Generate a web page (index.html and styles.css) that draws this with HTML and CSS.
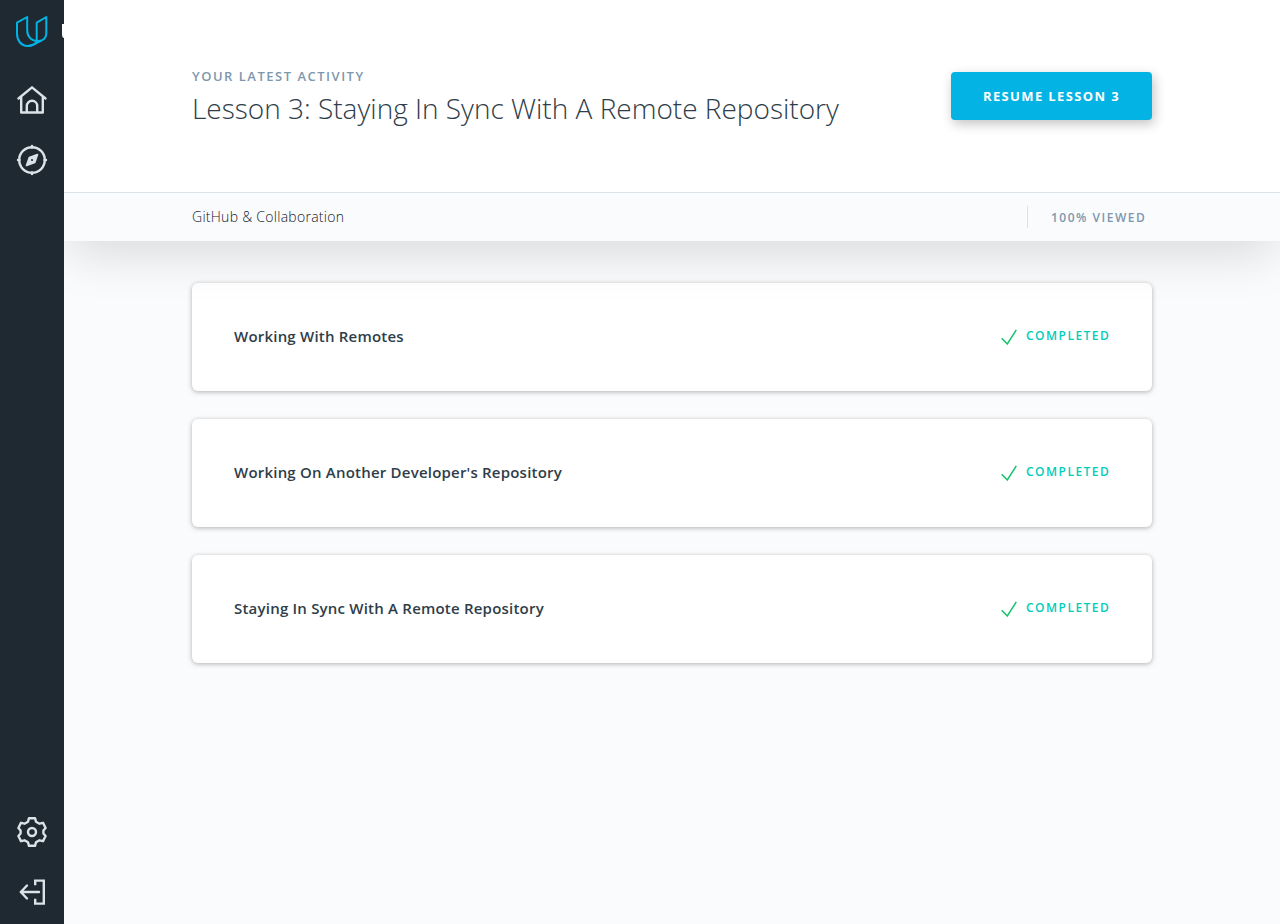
FILE: index.html
```
<!DOCTYPE html>
<html lang="en">
<head>
<meta charset="utf-8">
<title>GitHub &amp; Collaboration</title>
<link rel="stylesheet" href="styles.css">
</head>
<body>
<div class="app">
  <nav class="sidebar">
    <a class="brand">
      <svg class="logo" viewBox="0 0 32 32"><path d="M11.200 2 1 7.700V18.800C1 25.800 5.500 31 11.500 31S20.700 27.800 20.700 25.800V7.700L30.300 2V18.800C30.300 22.800 27 26 22 26C15.500 26 11.200 21.800 11.200 15.300Z"/><path d="M11.500 31C16 31 21 27.800 25.500 25.300"/></svg>
      <span class="wordmark"></span>
    </a>
    <a class="item home"><svg class="icon" viewBox="0 0 32 32"><path d="M2.500 14.500 16 3.300 29.500 14.500M5.200 12.500V28.500H26.800V12.500M10.800 28.500V22A5.200 5.200 0 0 1 21.200 22V28.500"/></svg></a>
    <a class="item"><svg class="icon" viewBox="0 0 32 32"><circle cx="16" cy="16" r="12.800"/><path d="M16 2V3.500M16 28.500V30M2 16H3.500M28.500 16H30"/><path class="needle" fill-rule="evenodd" d="M21.500 10.500 18.800 18.500 10.500 21.500 13.300 13.500ZM16 14.200A1.800 1.800 0 1 0 16 17.800A1.800 1.800 0 1 0 16 14.200Z"/></svg></a>
    <a class="item settings"><svg class="icon" viewBox="0 0 32 32"><path d="M13 2.200H19L20 5.700L23.500 7.700L27 6.800L29.600 12L27.400 14.500V17.500L29.600 20L27 25.200L23.500 24.300L20 26.300L19 29.800H13L12 26.300L8.500 24.300L5 25.200L2.400 20L4.600 17.500V14.500L2.400 12L5 6.800L8.500 7.700L12 5.700Z"/><circle cx="16" cy="16" r="4"/></svg></a>
    <a class="item"><svg class="icon" viewBox="0 0 32 32"><path class="door" d="M19.200 9.200V4.600H27.800V27.600H19.200V22.800"/><path d="M23 16H4.800M11 9.500 4.800 16 11 22.500"/></svg></a>
  </nav>
  <main class="content">
    <header class="header">
      <div class="activity">
        <div>
          <p class="eyebrow">YOUR LATEST ACTIVITY</p>
          <h1 class="lesson">Lesson 3: Staying In Sync With A Remote Repository</h1>
        </div>
        <a class="resume">RESUME LESSON 3</a>
      </div>
      <div class="course">
        <span class="course-name">GitHub &amp; Collaboration</span>
        <span class="viewed">100% VIEWED</span>
      </div>
    </header>
    <section class="cards">
      <article class="card"><h2 class="card-title">Working With Remotes</h2><div class="status"><svg class="check" viewBox="0 0 16 16"><path d="M.7 9.200 6.300 15 15.300.8"/></svg><span>COMPLETED</span></div></article>
      <article class="card"><h2 class="card-title">Working On Another Developer's Repository</h2><div class="status"><svg class="check" viewBox="0 0 16 16"><path d="M.7 9.200 6.300 15 15.300.8"/></svg><span>COMPLETED</span></div></article>
      <article class="card"><h2 class="card-title">Staying In Sync With A Remote Repository</h2><div class="status"><svg class="check" viewBox="0 0 16 16"><path d="M.7 9.200 6.300 15 15.300.8"/></svg><span>COMPLETED</span></div></article>
    </section>
  </main>
</div>
</body>
</html>
```
FILE: styles.css
```
* { box-sizing: border-box; }
body { margin: 0; font-family: "Open Sans", sans-serif; color: #2e3d49; background: #fafbfc; }
h1, h2, p { margin: 0; }
.app { display: flex; height: 924px; overflow: hidden; }
.sidebar { display: flex; flex-direction: column; flex: none; width: 64px; padding-bottom: 2px; background: #1f2932; overflow: hidden; }
.brand { display: flex; flex: none; align-items: center; gap: 14px; height: 62px; padding-left: 16px; }
.logo { flex: none; width: 32px; height: 32px; fill: none; stroke: #02b3e4; stroke-width: 2; stroke-linejoin: round; }
.wordmark { flex: none; width: 2px; height: 14px; background: #fff; border-bottom-left-radius: 2px 4px; }
.item { display: flex; flex: none; align-items: center; justify-content: center; height: 60px; }
.home { margin-top: 8px; }
.settings { margin-top: auto; }
.icon { width: 32px; height: 32px; fill: none; stroke: #dbe2e8; stroke-width: 2.400; stroke-linejoin: round; stroke-linecap: round; }
.icon .needle { fill: #dbe2e8; stroke-width: 1.600; }
.icon .door { stroke-linecap: butt; stroke-linejoin: miter; }
.content { flex: 1; min-width: 0; background: #fafbfd; overflow: hidden; }
.header { position: relative; z-index: 1; background: #fff; box-shadow: 0 20px 45px -6px rgba(0, 0, 0, .13); }
.activity { display: flex; justify-content: space-between; align-items: flex-start; height: 192px; padding: 66px 128px 0; }
.eyebrow { font-size: 13px; line-height: 20px; font-weight: 600; letter-spacing: 1.500px; color: #7d97ad; }
.lesson { font-size: 28px; line-height: 44px; font-weight: 300; white-space: nowrap; }
.resume { width: 201px; height: 48px; margin-top: 6px; border-radius: 4px; background: #02b3e4; color: #fff; font-size: 13px; line-height: 48px; font-weight: 700; letter-spacing: 1.380px; text-align: center; box-shadow: 2px 4px 12px rgba(0, 0, 0, .24); }
.course { display: flex; justify-content: space-between; align-items: center; height: 49px; padding: 0 128px; border-top: 1px solid #dbe2e8; background: #fafbfd; }
.course-name { font-size: 14px; line-height: 24px; font-weight: 300; letter-spacing: .270px; color: #14202a; }
.viewed { width: 125px; padding-left: 23px; border-left: 1px solid #dbe2e8; font-size: 12px; line-height: 20px; padding-top: 2px; font-weight: 600; letter-spacing: 1.500px; white-space: nowrap; color: #7d97ad; }
.cards { display: flex; flex-direction: column; gap: 28px; padding: 42px 128px 0; }
.card { display: flex; align-items: center; justify-content: space-between; height: 108px; padding: 0 42px 2px; border-radius: 6px; background: #fff; box-shadow: 0 1px 5px rgba(0, 0, 0, .3); }
.card-title { font-size: 15px; line-height: 24px; font-weight: 600; letter-spacing: .210px; }
.status { display: flex; align-items: center; gap: 9px; color: #02ccba; font-size: 12px; line-height: 20px; font-weight: 600; letter-spacing: 1.480px; }
.status span { width: 84px; white-space: nowrap; }
.check { width: 16px; height: 16px; margin-top: 2px; fill: none; stroke: #15c26b; stroke-width: 1.500; }
```
